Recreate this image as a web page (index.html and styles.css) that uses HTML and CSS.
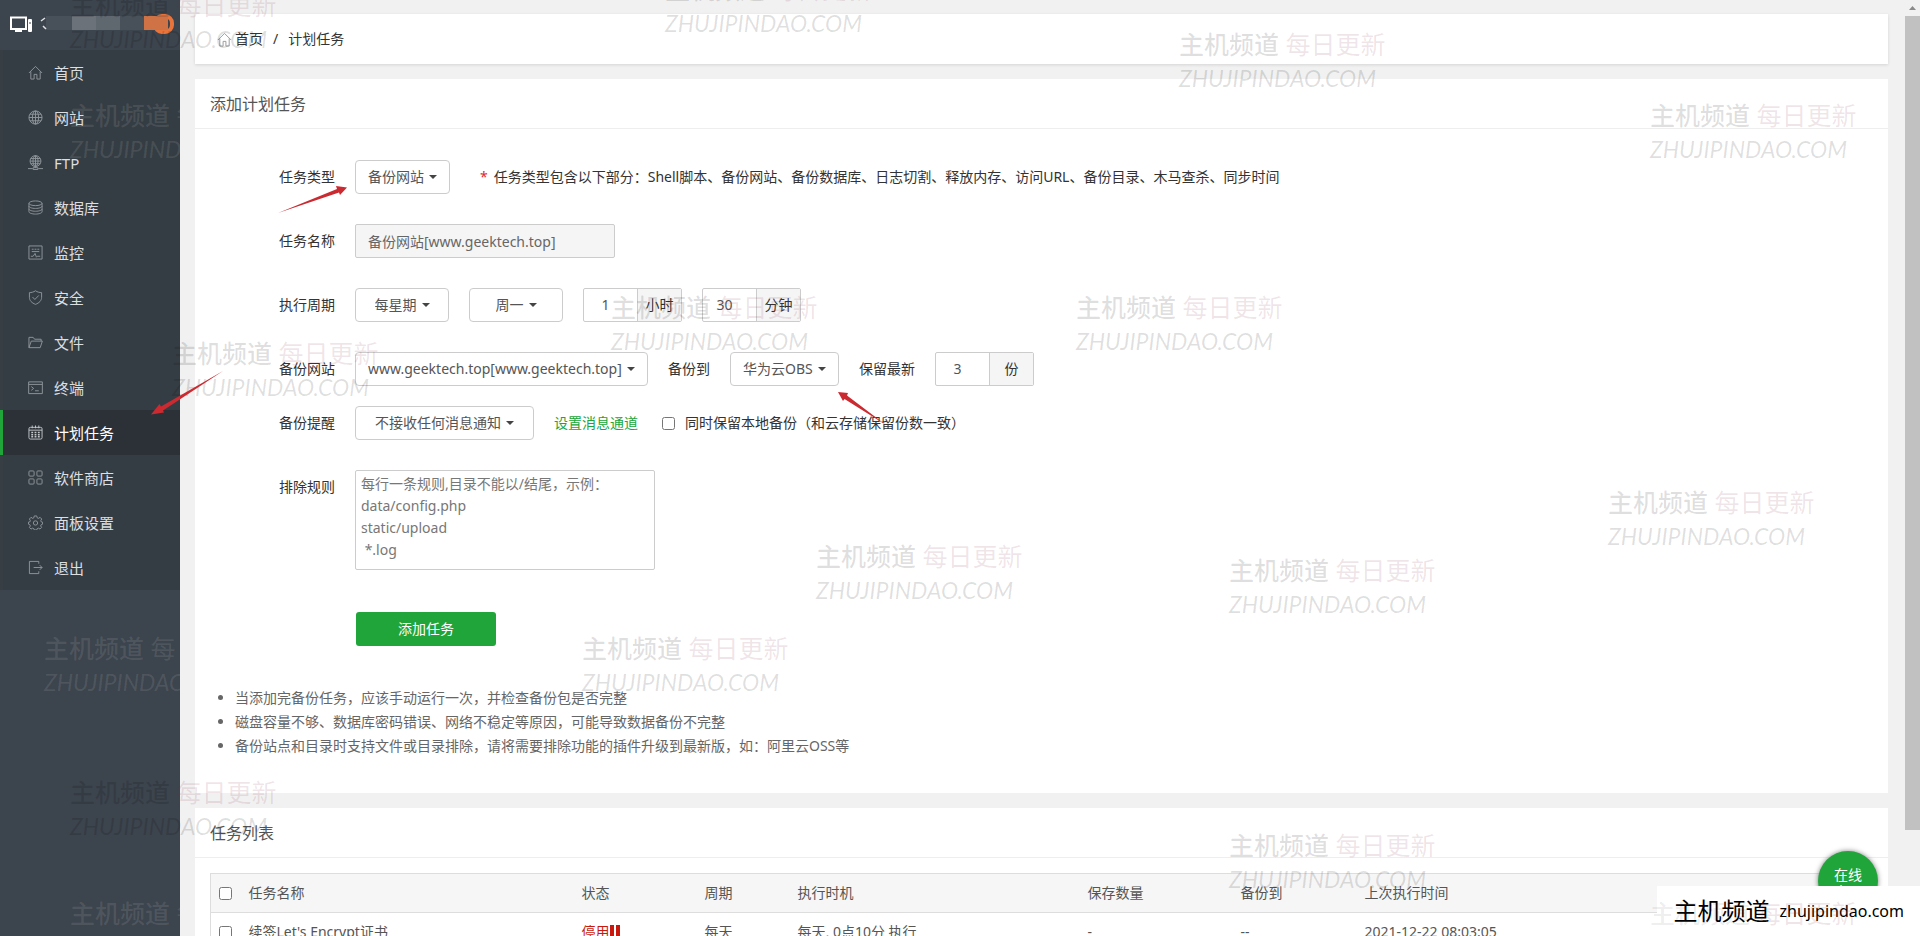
FILE: index.html
```html
<!DOCTYPE html>
<html lang="zh-CN">
<head>
<meta charset="utf-8">
<title>计划任务</title>
<link rel="stylesheet" href="styles.css">
</head>
<body>
<div class="app">
  <aside class="sidebar">
    <div class="server">
      <svg class="server-art" width="180" height="50" viewBox="0 0 180 50" aria-hidden="true">
        <rect x="46" y="16" width="98" height="14" fill="#485059"/>
        <rect x="72" y="16" width="24" height="14" fill="#6b7279"/>
        <rect x="96" y="16" width="24" height="14" fill="#5f676f"/>
        <path d="M11 17.500h15v11.500h-15z" fill="none" stroke="#fff" stroke-width="2"/>
        <path d="M15 31h7" stroke="#fff" stroke-width="2"/>
        <rect x="28" y="19" width="4" height="13" rx="1" fill="#fff"/>
        <path d="M30 22v2" stroke="#3c444d"/>
        <path d="M41 21l4-3M43 26l3 3" stroke="#dfe2e5" stroke-width="1.500"/>
        <rect x="155" y="16" width="17" height="16" rx="7" fill="#3c444d" stroke="#e8743b" stroke-width="4"/>
        <rect x="144" y="16" width="24" height="14" fill="#cf7347"/>
      </svg>
    </div>
    <nav class="menu">
      <a href="#"><svg class="ico" viewBox="0 0 16 16"><path d="M1 8.500L8 1.500l7 7M3 7v8h3.500v-5h3v5H13V7"/></svg>首页</a>
      <a href="#"><svg class="ico" viewBox="0 0 16 16"><circle cx="8" cy="8" r="7"/><ellipse cx="8" cy="8" rx="3.300" ry="7"/><path d="M1 8h14M8 1v14M2.200 4.500h11.600M2.200 11.500h11.600"/></svg>网站</a>
      <a href="#"><svg class="ico" viewBox="0 0 16 16"><circle cx="8" cy="6.500" r="5.800"/><ellipse cx="8" cy="6.500" rx="2.700" ry="5.800"/><path d="M2.200 6.500h11.600M8 .7v13M3 3.700h10M3 9.300h10M0 14.500h5M11 14.500h5M5.500 13.500h5v2h-5z"/></svg>FTP</a>
      <a href="#"><svg class="ico" viewBox="0 0 16 16"><ellipse cx="8" cy="3.500" rx="7" ry="2.500"/><path d="M1 3.500v9c0 1.400 3.100 2.500 7 2.500s7-1.100 7-2.500v-9M1 6.500C1 7.900 4.100 9 8 9s7-1.100 7-2.500M1 9.500C1 10.900 4.100 12 8 12s7-1.100 7-2.500"/></svg>数据库</a>
      <a href="#"><svg class="ico" viewBox="0 0 16 16"><path d="M1 1h14v14H1zM4 4.500h2M7 4.500h2M10 4.500h2M4 7h8M3 12h2.500l2-3 1.500 4 1-1H13"/></svg>监控</a>
      <a href="#"><svg class="ico" viewBox="0 0 16 16"><path d="M8 .8c2 1.500 4.500 2 6.500 2v5c0 3.500-2.500 6-6.500 7.500C4 13.800 1.500 11.300 1.500 7.800v-5c2 0 4.500-.5 6.500-2zM4.800 7.500l2.500 2.600 4.200-4.300"/></svg>安全</a>
      <a href="#"><svg class="ico" viewBox="0 0 16 16"><path d="M1 13.500v-11h4.500l1.500 2h7v2M1 13.500h12l2.300-7H3.500z"/></svg>文件</a>
      <a href="#"><svg class="ico" viewBox="0 0 16 16"><path d="M.7 2h14.600v12.500H.7zM.7 4.700h14.600M3.500 7l2.500 2-2.500 2M7.500 11.500h4"/></svg>终端</a>
      <a href="#" class="active" aria-current="page"><svg class="ico" viewBox="0 0 16 16"><rect x="1" y="2.500" width="14" height="12.500" rx="1.500"/><path d="M1 5.500h14M4.500.5v3M8 .5v3M11.500.5v3"/><path stroke-width="1.600" d="M3.500 8h2M7 8h2M10.500 8h2M3.500 10.300h2M7 10.300h2M10.500 10.300h2M3.500 12.600h2M7 12.600h2M10.500 12.600h2"/></svg>计划任务</a>
      <a href="#"><svg class="ico" viewBox="0 0 16 16"><rect x="1" y="1" width="5.500" height="5.500" rx="1"/><rect x="9.500" y="1" width="5.500" height="5.500" rx="1"/><rect x="1" y="9.500" width="5.500" height="5.500" rx="1"/><rect x="9.500" y="9.500" width="5.500" height="5.500" rx="1"/></svg>软件商店</a>
      <a href="#"><svg class="ico" viewBox="0 0 16 16"><path d="M6.700 1h2.600l.5 2 1.300.6 1.800-1.100 1.700 1.800-1 1.800.5 1.200 1.400.3v2.200l-1.500.6-.5 1.200 1 1.700-1.700 1.700-1.700-1-1.300.5-.5 1.500H6.700l-.5-1.500-1.300-.5-1.700 1-1.700-1.700 1-1.700-.5-1.200L.5 9.800V7.600l1.500-.3.500-1.200-1-1.800 1.700-1.800 1.800 1.100L6.200 3z"/><circle cx="8" cy="8.500" r="2.300"/></svg>面板设置</a>
      <a href="#"><svg class="ico" viewBox="0 0 16 16"><path d="M11.500 4V1.500h-10v13h10V12M6 8h9M12.500 5.500L15 8l-2.500 2.500"/></svg>退出</a>
    </nav>
    <div class="mark light" style="left:70px;top:98px" aria-hidden="true"><b>主机频道</b> <i>每日更新</i><em>ZHUJIPINDAO.COM</em></div>
    <div class="mark light" style="left:44px;top:631px" aria-hidden="true"><b>主机频道</b> <i>每日更新</i><em>ZHUJIPINDAO.COM</em></div>
    <div class="mark light" style="left:70px;top:896px" aria-hidden="true"><b>主机频道</b> <i>每日更新</i><em>ZHUJIPINDAO.COM</em></div>
  </aside>

  <main class="main">
    <div class="card crumbs">
      <a href="#"><svg class="ico" viewBox="0 0 16 16"><path d="M1 8.500L8 1.500l7 7M3 7v8h3.500v-5h3v5H13V7"/></svg>首页</a><span>/</span><a href="#">计划任务</a>
    </div>

    <section class="card">
      <h2 class="card-title">添加计划任务</h2>
      <form class="form">
        <div class="row">
          <label class="lead" for="type">任务类型</label>
          <span class="pick"><select id="type"><option>备份网站</option></select><svg class="caret" viewBox="0 0 8 4"><path d="M0 0h8L4 4z"/></svg></span>
          <p class="hint"><span class="star">*</span>任务类型包含以下部分：Shell脚本、备份网站、备份数据库、日志切割、释放内存、访问URL、备份目录、木马查杀、同步时间</p>
        </div>
        <div class="row">
          <label class="lead" for="name">任务名称</label>
          <input class="name" id="name" type="text" value="备份网站[www.geektech.top]" readonly>
        </div>
        <div class="row">
          <label class="lead" for="cycle">执行周期</label>
          <span class="pick"><select id="cycle"><option>每星期</option></select><svg class="caret" viewBox="0 0 8 4"><path d="M0 0h8L4 4z"/></svg></span>
          <span class="pick"><select aria-label="星期"><option>周一</option></select><svg class="caret" viewBox="0 0 8 4"><path d="M0 0h8L4 4z"/></svg></span>
          <span class="num"><input id="hour" type="number" value="1"><label for="hour">小时</label></span>
          <span class="num"><input id="minute" type="number" value="30"><label for="minute">分钟</label></span>
        </div>
        <div class="row tight">
          <label class="lead" for="site">备份网站</label>
          <span class="pick"><select id="site"><option>www.geektech.top[www.geektech.top]</option></select><svg class="caret" viewBox="0 0 8 4"><path d="M0 0h8L4 4z"/></svg></span>
          <label for="dest">备份到</label>
          <span class="pick"><select id="dest"><option>华为云OBS</option></select><svg class="caret" viewBox="0 0 8 4"><path d="M0 0h8L4 4z"/></svg></span>
          <label for="keep">保留最新</label>
          <span class="num"><input id="keep" type="number" value="3"><label for="keep">份</label></span>
        </div>
        <div class="row">
          <label class="lead" for="notice">备份提醒</label>
          <span class="pick wide"><select id="notice"><option>不接收任何消息通知</option></select><svg class="caret" viewBox="0 0 8 4"><path d="M0 0h8L4 4z"/></svg></span>
          <a class="link" href="#">设置消息通道</a>
          <label class="check"><input type="checkbox">同时保留本地备份（和云存储保留份数一致）</label>
        </div>
        <div class="row top">
          <label class="lead" for="rules">排除规则</label>
          <textarea id="rules" placeholder="每行一条规则,目录不能以/结尾，示例：&#10;data/config.php&#10;static/upload&#10; *.log"></textarea>
        </div>
        <button class="submit" type="button">添加任务</button>
      </form>
      <ul class="tips">
        <li>当添加完备份任务，应该手动运行一次，并检查备份包是否完整</li>
        <li>磁盘容量不够、数据库密码错误、网络不稳定等原因，可能导致数据备份不完整</li>
        <li>备份站点和目录时支持文件或目录排除，请将需要排除功能的插件升级到最新版，如：阿里云OSS等</li>
      </ul>
    </section>

    <section class="card">
      <h2 class="card-title">任务列表</h2>
      <div class="list">
        <table>
          <colgroup><col class="c-check"><col class="c-name"><col class="c-state"><col class="c-cycle"><col class="c-when"><col class="c-keep"><col class="c-dest"><col></colgroup>
          <thead>
            <tr><th><input type="checkbox" aria-label="全选"></th><th>任务名称</th><th>状态</th><th>周期</th><th>执行时机</th><th>保存数量</th><th>备份到</th><th>上次执行时间</th></tr>
          </thead>
          <tbody>
            <tr><td><input type="checkbox" aria-label="选择任务"></td><td>续签Let's Encrypt证书</td><td><a class="stopped" href="#">停用<svg width="10" height="12" viewBox="0 0 10 12"><path d="M0 0h4v12H0zM6 0h4v12H6z" fill="currentColor"/></svg></a></td><td>每天</td><td>每天, 0点10分 执行</td><td>-</td><td>--</td><td>2021-12-22 08:03:05</td></tr>
          </tbody>
        </table>
      </div>
    </section>
  </main>

  <div class="scroll" aria-hidden="true">
    <svg viewBox="0 0 15 16" width="15" height="16"><path d="M4 10h7L7.500 6z" fill="#8a8a8a"/></svg>
    <div class="thumb"></div>
  </div>

  <button class="service" type="button">在线<br>客服</button>
  <div class="brand"><strong>主机频道</strong><span>zhujipindao.com</span></div>

  <div class="mark" style="left:70px;top:-12px" aria-hidden="true"><b>主机频道</b> <i>每日更新</i><em>ZHUJIPINDAO.COM</em></div>
  <div class="mark" style="left:665px;top:-28px" aria-hidden="true"><b>主机频道</b> <i>每日更新</i><em>ZHUJIPINDAO.COM</em></div>
  <div class="mark" style="left:1179px;top:27px" aria-hidden="true"><b>主机频道</b> <i>每日更新</i><em>ZHUJIPINDAO.COM</em></div>
  <div class="mark" style="left:1650px;top:98px" aria-hidden="true"><b>主机频道</b> <i>每日更新</i><em>ZHUJIPINDAO.COM</em></div>
  <div class="mark" style="left:611px;top:290px" aria-hidden="true"><b>主机频道</b> <i>每日更新</i><em>ZHUJIPINDAO.COM</em></div>
  <div class="mark" style="left:1076px;top:290px" aria-hidden="true"><b>主机频道</b> <i>每日更新</i><em>ZHUJIPINDAO.COM</em></div>
  <div class="mark" style="left:172px;top:336px" aria-hidden="true"><b>主机频道</b> <i>每日更新</i><em>ZHUJIPINDAO.COM</em></div>
  <div class="mark" style="left:1608px;top:485px" aria-hidden="true"><b>主机频道</b> <i>每日更新</i><em>ZHUJIPINDAO.COM</em></div>
  <div class="mark" style="left:816px;top:539px" aria-hidden="true"><b>主机频道</b> <i>每日更新</i><em>ZHUJIPINDAO.COM</em></div>
  <div class="mark" style="left:1229px;top:553px" aria-hidden="true"><b>主机频道</b> <i>每日更新</i><em>ZHUJIPINDAO.COM</em></div>
  <div class="mark" style="left:582px;top:631px" aria-hidden="true"><b>主机频道</b> <i>每日更新</i><em>ZHUJIPINDAO.COM</em></div>
  <div class="mark" style="left:70px;top:775px" aria-hidden="true"><b>主机频道</b> <i>每日更新</i><em>ZHUJIPINDAO.COM</em></div>
  <div class="mark" style="left:1229px;top:828px" aria-hidden="true"><b>主机频道</b> <i>每日更新</i><em>ZHUJIPINDAO.COM</em></div>
  <div class="mark faint" style="left:1650px;top:896px" aria-hidden="true"><b>主机频道</b> <i>每日更新</i><em>ZHUJIPINDAO.COM</em></div>

  <svg class="arrow" style="left:278px;top:185px" width="70" height="30" viewBox="0 0 70 30"><path d="M0 28L59 4l-1-3 11 1.500L62 10l-1-2.500z"/></svg>
  <svg class="arrow" style="left:151px;top:370px" width="73" height="46" viewBox="0 0 73 46"><path d="M72 1L10 36.500 8.500 34 0 44.500l13-2-1-2z"/></svg>
  <svg class="arrow" style="left:838px;top:392px" width="50" height="34" viewBox="0 0 50 34"><path d="M0 0l5 9 1.500-2L48 33 9 3.500l1-2.500z"/></svg>
</div>
</body>
</html>
```
FILE: styles.css
```css
* { box-sizing: border-box; }

body {
  margin: 0;
  font: 14px/20px "Noto Sans", "Noto Sans CJK SC", sans-serif;
  color: #333;
  background: #f1f1f1;
}

a { color: inherit; text-decoration: none; }

select, input, textarea, button { font: inherit; color: inherit; }

.app {
  position: relative;
  display: flex;
  height: 100vh;
  overflow: hidden;
}

.ico {
  width: 15px;
  height: 15px;
  fill: none;
  stroke: currentColor;
  stroke-width: 1;
}

/* sidebar */
.sidebar {
  position: relative;
  flex: none;
  width: 180px;
  overflow: hidden;
  background: #3c444d;
}

.server { height: 50px; }
.server-art { display: block; }

.menu {
  display: flex;
  flex-direction: column;
  background: #353d44;
}

.menu a {
  display: flex;
  align-items: center;
  gap: 11px;
  height: 45px;
  padding-left: 25px;
  border-left: 3px solid #373e44;
  color: #dcdee0;
  font-size: 15px;
}

.menu .ico { color: #8f969c; }
.menu .active { background: #2c3138; border-left-color: #20a53a; color: #fff; }
.menu .active .ico { color: #c4c8cb; }

/* content */
.main {
  flex: 1;
  min-width: 0;
  display: flex;
  flex-direction: column;
  gap: 15px;
  padding: 14px 17px 0 15px;
}

.card { flex: none; background: #fff; }

.crumbs {
  display: flex;
  align-items: center;
  gap: 10px;
  height: 50px;
  padding-left: 22px;
  box-shadow: 0 1px 3px rgba(0, 0, 0, .12);
}

.crumbs a { display: flex; align-items: center; gap: 3px; }
.crumbs .ico { color: #999; }

.card-title {
  margin: 0;
  padding: 2px 15px 0;
  border-bottom: 1px solid #eee;
  font-size: 16px;
  font-weight: 400;
  line-height: 47px;
  color: #555;
}

.form { padding: 31px 15px 0 0; }

.row {
  display: flex;
  align-items: center;
  gap: 20px;
  margin-bottom: 30px;
}

.row.tight { margin-bottom: 20px; }
.row.top { align-items: flex-start; margin-bottom: 42px; }
.row.top .lead { line-height: 34px; }

.lead { width: 140px; text-align: right; }

.pick {
  display: inline-flex;
  align-items: center;
  justify-content: center;
  gap: 5px;
  min-width: 94px;
  height: 34px;
  padding: 0 12px;
  border: 1px solid #ccc;
  border-radius: 4px;
  color: #555;
}

.pick.wide { min-width: 179px; }

.pick select {
  appearance: none;
  padding: 0;
  border: 0;
  outline: 0;
  background: none;
}

.caret { width: 8px; height: 4px; fill: #444; }

.hint { margin: 0 0 0 10px; }
.star { margin-right: 6px; color: #e0282e; }

.name {
  width: 260px;
  height: 34px;
  padding: 0 12px;
  border: 1px solid #ccc;
  border-radius: 2px;
  background: #f5f5f5;
  color: #666;
}

.num {
  display: inline-flex;
  height: 34px;
  border: 1px solid #ccc;
  border-radius: 2px;
}

.num input {
  width: 53px;
  padding: 0 10px 0 0;
  border: 0;
  background: none;
  text-align: center;
  color: #555;
  appearance: textfield;
}

.num input::-webkit-inner-spin-button { display: none; }

.num label {
  width: 44px;
  border-left: 1px solid #ccc;
  background: #f5f5f5;
  line-height: 32px;
  text-align: center;
}

.link { color: #20a53a; }

.check { display: flex; align-items: center; gap: 10px; margin-left: 4px; }

input[type="checkbox"] { width: 13px; height: 13px; margin: 0; }

textarea {
  width: 300px;
  height: 100px;
  padding: 2px 5px;
  border: 1px solid #ccc;
  border-radius: 2px;
  line-height: 22px;
  resize: none;
}

textarea::placeholder { color: #777; }

.submit {
  display: block;
  width: 140px;
  height: 34px;
  margin-left: 161px;
  border: 0;
  border-radius: 3px;
  background: #20a53a;
  color: #fff;
}

.tips {
  margin: 40px 0 0;
  padding: 0 15px 35px 40px;
  line-height: 24px;
  color: #666;
}

/* task table */
.list { padding: 15px 15px 0; }

table {
  width: 100%;
  border: 1px solid #ddd;
  border-collapse: collapse;
  table-layout: fixed;
  color: #555;
}

th, td {
  height: 39px;
  padding: 0 8px;
  border-bottom: 1px solid #ddd;
  font-weight: 400;
  text-align: left;
  white-space: nowrap;
}

th { background: #f6f6f6; }
th input, td input { display: block; }

.c-check { width: 30px; }
.c-name { width: 333px; }
.c-state { width: 123px; }
.c-cycle { width: 93px; }
.c-when { width: 290px; }
.c-keep { width: 153px; }
.c-dest { width: 124px; }

.stopped { color: #c9190f; }

/* window scrollbar */
.scroll { flex: none; width: 15px; background: #f1f1f1; }
.scroll svg { display: block; }
.thumb { height: 87%; background: #c1c1c1; }

/* floating pieces */
.service {
  position: absolute;
  right: 42px;
  bottom: 25px;
  width: 60px;
  height: 60px;
  padding: 3px 0 0;
  border: 0;
  border-radius: 50%;
  background: #20a53a;
  box-shadow: 0 0 5px rgba(0, 0, 0, .5);
  color: #fff;
  line-height: 17px;
}

.brand {
  position: absolute;
  right: 0;
  bottom: 0;
  display: flex;
  align-items: center;
  gap: 10px;
  height: 50px;
  padding: 0 16px;
  background: #fff;
  color: #000;
}

.brand strong { font-size: 24px; font-weight: 400; line-height: 34px; }
.brand span { font-size: 16px; }

.mark {
  position: absolute;
  font-size: 25px;
  line-height: 34px;
  color: rgba(0, 0, 0, .13);
  white-space: nowrap;
  pointer-events: none;
}

.mark b { font-weight: 500; }
.mark i { font-style: normal; color: rgba(130, 50, 75, .13); }
.mark em { display: block; font-family: Lato, sans-serif; font-size: 23px; }
.mark.light, .mark.light i { color: rgba(255, 255, 255, .1); }
.mark.faint { color: rgba(0, 0, 0, .08); }

.arrow { position: absolute; fill: #cb2a31; pointer-events: none; }
```
